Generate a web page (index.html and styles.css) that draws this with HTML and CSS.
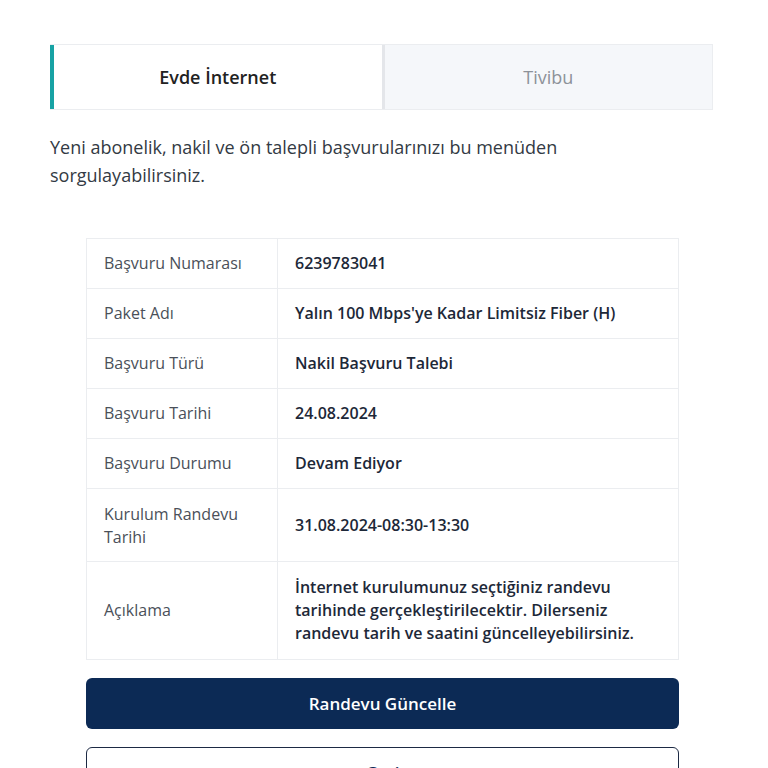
FILE: index.html
```html
<!DOCTYPE html>
<html lang="tr">
<head>
    <meta charset="UTF-8">
    <meta name="viewport" content="width=device-width, initial-scale=1.0">
    <title>Başvuru Sorgulama</title>
    <link rel="stylesheet" href="styles.css">
</head>
<body>

    <div class="page">
        <p class="lead">Başvurularınızı takip edin, süreci kolayca yönetin.</p>

        <div class="tabs">
            <div class="tab active">Evde İnternet</div>
            <div class="tab">Tivibu</div>
        </div>

        <p class="intro">Yeni abonelik, nakil ve ön talepli başvurularınızı bu menüden sorgulayabilirsiniz.</p>

        <div class="result">
            <table class="details">
                <tr>
                    <td class="label">Başvuru Numarası</td>
                    <td class="value">6239783041</td>
                </tr>
                <tr>
                    <td class="label">Paket Adı</td>
                    <td class="value">Yalın 100 Mbps'ye Kadar Limitsiz Fiber (H)</td>
                </tr>
                <tr>
                    <td class="label">Başvuru Türü</td>
                    <td class="value">Nakil Başvuru Talebi</td>
                </tr>
                <tr>
                    <td class="label">Başvuru Tarihi</td>
                    <td class="value">24.08.2024</td>
                </tr>
                <tr>
                    <td class="label">Başvuru Durumu</td>
                    <td class="value">Devam Ediyor</td>
                </tr>
                <tr class="tall">
                    <td class="label">Kurulum Randevu Tarihi</td>
                    <td class="value">31.08.2024-08:30-13:30</td>
                </tr>
                <tr class="tall desc">
                    <td class="label">Açıklama</td>
                    <td class="value">İnternet kurulumunuz seçtiğiniz randevu tarihinde gerçekleştirilecektir. Dilerseniz randevu tarih ve saatini güncelleyebilirsiniz.</td>
                </tr>
            </table>

            <button class="btn primary">Randevu Güncelle</button>
            <button class="btn outline">Geri</button>
        </div>
    </div>

</body>
</html>
```

FILE: styles.css
```css
:root {
    --navy: #0c2a55;
    --text: #333a44;
    --value: #1d2838;
    --line: #ebedf0;
    --teal: #17a2a4;
}

body {
    font-family: 'Open Sans', 'Noto Sans', sans-serif;
    background: #fff;
    color: var(--text);
    margin: 0;
    overflow: hidden;
}

.page {
    width: 663px;
    margin-left: 50px;
}

.lead {
    font-size: 18px;
    line-height: 28px;
    margin: -26px 0 0;
    color: #333;
}

.tabs {
    display: flex;
    margin-top: 42px;
    height: 64px;
    border: 1px solid var(--line);
    border-left: none;
}

.tab {
    flex: 1;
    display: flex;
    justify-content: center;
    align-items: center;
    font-size: 18px;
    color: #8d9299;
    background: #f5f7fa;
}

.tab.active {
    background: #fff;
    color: #222;
    font-weight: 600;
    border-left: 4px solid var(--teal);
    border-right: 3px solid #e4e6ea;
}

.intro {
    font-size: 18px;
    line-height: 28px;
    margin: 23px 0 0;
    width: 560px;
}

.result {
    width: 593px;
    margin: 49px 0 0 36px;
}

.details {
    width: 100%;
    border-collapse: collapse;
    table-layout: fixed;
    font-size: 16px;
}

.details td {
    border: 1px solid var(--line);
    height: 49px;
    padding: 0 17px;
    line-height: 23px;
}

.details tr.tall td {
    padding: 12px 17px 11px;
}

.details tr.desc td {
    padding: 14px 17px;
}

.label {
    width: 156px;
    color: #4a5059;
}

.value {
    font-weight: 600;
    color: var(--value);
}

.btn {
    display: block;
    width: 100%;
    height: 51px;
    font-family: inherit;
    font-size: 17px;
    font-weight: 600;
    border-radius: 6px;
    cursor: pointer;
}

.primary {
    margin-top: 18px;
    background: var(--navy);
    color: #fff;
    border: none;
}

.outline {
    margin-top: 18px;
    background: #fff;
    color: var(--navy);
    border: 1.5px solid #1d2a44;
}
```
